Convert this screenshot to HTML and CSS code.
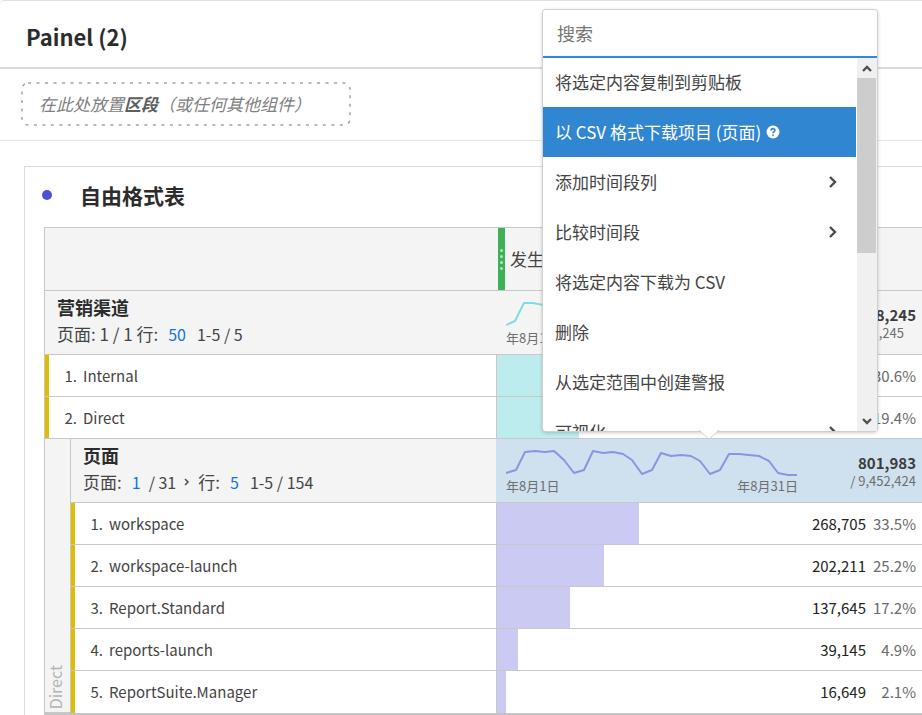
FILE: index.html
```html
<!DOCTYPE html>
<html lang="zh-CN">
<head>
<meta charset="utf-8">
<title>Painel (2)</title>
<link rel="stylesheet" href="styles.css">
</head>
<body>
<main class="panel">
  <header class="panel-header"><h1>Painel (2)</h1></header>
  <section class="segments">
    <div class="dropzone">
      <svg class="dropzone-outline" aria-hidden="true"><rect x="1" y="1" width="328" height="42" rx="6"/></svg>
      <em>在此处放置<b>区段</b>（或任何其他组件）</em>
    </div>
  </section>
  <section class="card">
    <div class="card-title"><span class="dot"></span><h2>自由格式表</h2></div>
    <table class="freeform">
      <colgroup><col class="col-rail"><col class="col-name"><col></colgroup>
      <thead>
        <tr class="tall">
          <th colspan="2"></th>
          <th class="metric" scope="col"><div class="metric-head"><span class="handle"><i></i><i></i><i></i><i></i></span>发生</div></th>
        </tr>
      </thead>
      <tbody>
        <tr class="tall group">
          <th colspan="2" scope="rowgroup">
            <div class="group-name">营销渠道</div>
            <div class="pager"><span>页面: 1 / 1 行:</span><button type="button">50</button><span class="range">1-5 / 5</span></div>
          </th>
          <td class="summary">
            <div class="summary-row">
              <div class="trend teal">
                <svg viewBox="0 0 292 28" aria-hidden="true"><polyline points="0,24 9,20 18,2 27,2 37,4"/></svg>
                <div class="dates"><span>年8月1日</span></div>
              </div>
              <div class="total"><strong>8,245</strong><span class="inset">,245</span></div>
            </div>
          </td>
        </tr>
        <tr>
          <td class="item" colspan="2"><span class="index">1.</span>Internal</td>
          <td class="value"><span class="bar teal" style="width:30.6%"></span><span class="pct">30.6%</span></td>
        </tr>
        <tr>
          <td class="item" colspan="2"><span class="index">2.</span>Direct</td>
          <td class="value"><span class="bar teal" style="width:19.4%"></span><span class="pct">19.4%</span></td>
        </tr>
        <tr class="tall group">
          <th class="rail" rowspan="6" scope="rowgroup"><span>Direct</span></th>
          <th scope="rowgroup">
            <div class="group-name">页面</div>
            <div class="pager"><span>页面:</span><button type="button">1</button><span class="range-total">/ 31</span>
              <button type="button" class="next" aria-label="下一页"><svg viewBox="0 0 6 10"><path d="M1 2l3 3-3 3"/></svg></button>
              <span>行:</span><button type="button">5</button><span class="range">1-5 / 154</span></div>
          </th>
          <td class="summary selected">
            <div class="summary-row">
              <div class="trend violet">
                <svg viewBox="0 0 292 28" aria-hidden="true"><polyline points="0,24 10,21 19,3 29,2 39,3 48,2 58,11 68,24 78,21 87,2 97,4 107,3 117,5 126,11 136,25 146,21 155,4 165,7 175,6 185,7 194,12 204,25 214,21 223,5 233,5 243,6 253,7 263,12 272,24 282,26 291,26"/></svg>
                <div class="dates"><span>年8月1日</span><span>年8月31日</span></div>
              </div>
              <div class="total"><strong>801,983</strong><span>/ 9,452,424</span></div>
            </div>
          </td>
        </tr>
        <tr>
          <td class="item"><span class="index">1.</span>workspace</td>
          <td class="value"><span class="bar violet" style="width:33.5%"></span><span class="num">268,705</span><span class="pct">33.5%</span></td>
        </tr>
        <tr>
          <td class="item"><span class="index">2.</span>workspace-launch</td>
          <td class="value"><span class="bar violet" style="width:25.2%"></span><span class="num">202,211</span><span class="pct">25.2%</span></td>
        </tr>
        <tr>
          <td class="item"><span class="index">3.</span>Report.Standard</td>
          <td class="value"><span class="bar violet" style="width:17.2%"></span><span class="num">137,645</span><span class="pct">17.2%</span></td>
        </tr>
        <tr>
          <td class="item"><span class="index">4.</span>reports-launch</td>
          <td class="value"><span class="bar violet" style="width:4.9%"></span><span class="num">39,145</span><span class="pct">4.9%</span></td>
        </tr>
        <tr>
          <td class="item"><span class="index">5.</span>ReportSuite.Manager</td>
          <td class="value"><span class="bar violet" style="width:2.1%"></span><span class="num">16,649</span><span class="pct">2.1%</span></td>
        </tr>
      </tbody>
    </table>
  </section>
</main>

<div class="menu">
  <input class="menu-search" type="text" placeholder="搜索" aria-label="搜索">
  <div class="menu-body">
    <div class="menu-list" role="menu">
      <button type="button" role="menuitem">将选定内容复制到剪贴板</button>
      <button type="button" role="menuitem" class="active">以 CSV 格式下载项目 (页面)
        <svg class="help" viewBox="0 0 14 14" aria-hidden="true"><circle cx="7" cy="7" r="6.5"/><path d="M5 5.4C5 3.1 9 3.1 9 5.3 9 6.7 7 6.700 7 8.300M7 9.600v1.500"/></svg></button>
      <button type="button" role="menuitem">添加时间段列<svg class="chevron" viewBox="0 0 10 14" aria-hidden="true"><path d="M2 2l5 5-5 5"/></svg></button>
      <button type="button" role="menuitem">比较时间段<svg class="chevron" viewBox="0 0 10 14" aria-hidden="true"><path d="M2 2l5 5-5 5"/></svg></button>
      <button type="button" role="menuitem">将选定内容下载为 CSV</button>
      <button type="button" role="menuitem">删除</button>
      <button type="button" role="menuitem">从选定范围中创建警报</button>
      <button type="button" role="menuitem">可视化<svg class="chevron" viewBox="0 0 10 14" aria-hidden="true"><path d="M2 2l5 5-5 5"/></svg></button>
    </div>
    <div class="scrollbar" aria-hidden="true">
      <svg viewBox="0 0 20 20"><path d="M6 13l4-4 4 4"/></svg>
      <span class="thumb"></span>
      <svg viewBox="0 0 20 20"><path d="M6 8l4 4 4-4"/></svg>
    </div>
  </div>
  <svg class="menu-tail" viewBox="0 0 20 11" aria-hidden="true"><path d="M0 0L10 9 20 0"/></svg>
</div>
</body>
</html>
```

FILE: styles.css
```css
* { box-sizing: border-box; }

body {
  margin: 0;
  overflow: hidden;
  background: #fff;
  color: #444;
  font: 15px/20px "Noto Sans CJK SC", "Noto Sans", sans-serif;
}

h1, h2 { margin: 0; color: #2c2c2c; font-weight: 700; }
button { margin: 0; padding: 0; border: 0; background: none; color: inherit; font: inherit; cursor: pointer; }

.panel { border-top: 1px solid #e1e1e1; border-radius: 4px 0 0 0; }
.panel-header { padding: 23px 26px 19px; border-bottom: 2px solid #dadada; }
.panel-header h1 { font-size: 22px; line-height: 24px; }

.segments { padding: 13px 21px 14px; border-bottom: 1px solid #e6e6e6; }
.dropzone {
  position: relative;
  display: flex;
  align-items: center;
  width: 330px;
  height: 44px;
  padding-left: 18px;
  color: #808080;
  font-size: 17px;
}
.dropzone b { color: #5e5e5e; }
.dropzone-outline { position: absolute; inset: 0; width: 100%; height: 100%; fill: none; stroke: #a4a4a4; stroke-width: 1.5; stroke-dasharray: 3 5.500; }

.card { margin: 25px 0 0 24px; border: 1px solid #dcdcdc; border-width: 1px 0 0 1px; }
.card-title { display: flex; align-items: center; gap: 28px; height: 60px; padding: 0 17px 5px; }
.card-title h2 { font-size: 21px; line-height: 30px; }
.dot { width: 10px; height: 10px; border-radius: 50%; background: #4f4fd6; }

.freeform {
  width: calc(100% - 19px);
  margin-left: 19px;
  table-layout: fixed;
  border-collapse: separate;
  border-spacing: 0;
  border-top: 1px solid #c8c8c8;
  border-bottom: 2px solid #c4c4c4;
}
.col-rail { width: 27px; }
.col-name { width: 425px; }
.freeform th, .freeform td { height: 42px; padding: 0; border-bottom: 1px solid #c8c8c8; text-align: left; font-weight: 400; }
.freeform th { background: #f4f4f4; }
.freeform .tall > * { height: 64px; }
.freeform thead .tall > * { height: 63px; }
.freeform tr > :first-child { border-left: 1px solid #c8c8c8; }
.freeform tbody tr:last-child > * { border-bottom: 0; }

.metric-head { display: flex; align-items: center; height: 62px; gap: 5px; margin-left: 2px; font-size: 17px; }
.handle { display: flex; flex-direction: column; align-items: center; justify-content: center; gap: 3px; width: 7px; height: 62px; background: #3db155; }
.handle i { width: 3px; height: 3px; border-radius: 50%; background: #b5e3be; }

.freeform .group th { padding: 0 0 4px 12px; }
.group-name { color: #2c2c2c; font-size: 18px; line-height: 26px; font-weight: 700; }
.pager { display: flex; align-items: baseline; gap: 8px; font-size: 17px; line-height: 27px; }
.pager button { margin-left: 2px; color: #1473e6; font-size: 16px; }
.pager .range { margin-left: 3px; }
.range, .range-total { font-size: 16px; }
.pager .next { align-self: center; margin-left: 0; }
.next svg { display: block; width: 6px; height: 10px; fill: none; stroke: #4b4b4b; stroke-width: 1.5; }

.freeform .group .rail { padding: 0 0 3px; border-right: 1px solid #c8c8c8; vertical-align: bottom; color: #b3b3b3; font-size: 16px; line-height: 20px; }
.rail span { display: block; writing-mode: vertical-rl; transform: rotate(180deg); }

.freeform .item { position: relative; padding-left: 10px; }
.freeform tr > .item:first-child { border-left: 0; }
.freeform tr > .item[colspan] { border-left: 1px solid #c8c8c8; }
.item::before { content: ""; position: absolute; left: 0; top: 0; bottom: 0; width: 4px; background: #e0bd00; }
.index { display: inline-block; width: 22px; margin-right: 6px; text-align: right; }

.freeform td.value { position: relative; padding-right: 6px; border-left: 1px solid #c8c8c8; text-align: right; }
.bar { position: absolute; left: 0; top: 0; bottom: 0; }
.bar.teal { background: #bcecee; }
.bar.violet { background: #cbcaf2; }
.num { color: #222; }
.pct { display: inline-block; width: 50px; color: #6a6a6a; }

.summary { background: #f4f4f4; }
.freeform .summary.selected { background: #cfe0ef; }
.summary-row { display: flex; justify-content: space-between; padding: 2px 6px 0 10px; }
.trend { width: 292px; }
.trend svg { display: block; width: 292px; height: 28px; fill: none; stroke-width: 2; stroke-linejoin: round; }
.trend.teal svg { stroke: #7fdde0; }
.trend.violet svg { stroke: #8f92e3; }
.dates { display: flex; justify-content: space-between; color: #6e6e6e; font-size: 13px; line-height: 18px; }
.total { display: flex; flex-direction: column; align-items: flex-end; justify-content: center; line-height: 18px; }
.total strong { color: #3c3c3c; }
.total span { color: #6e6e6e; font-size: 13px; }
.total .inset { margin-right: 12px; }

.menu {
  position: absolute;
  left: 543px;
  top: 10px;
  width: 334px;
  border-radius: 3px;
  background: #fff;
  box-shadow: 0 0 0 1px #d0d0d0, 0 1px 4px rgba(0, 0, 0, .3);
}
.menu-search {
  display: block;
  width: 100%;
  height: 48px;
  padding: 0 14px;
  border: 0;
  border-bottom: 2px solid #2f86e4;
  border-radius: 3px 3px 0 0;
  outline: 0;
  background: #fff;
  font: 18px/24px "Noto Sans CJK SC", sans-serif;
}
.menu-search::placeholder { color: #757575; opacity: 1; }
.menu-body { display: flex; height: 373px; }
.menu-list { flex: 1; overflow: hidden; }
.menu-list button { display: flex; align-items: center; width: 100%; height: 50px; padding: 0 18px 1px 12px; font-size: 17px; text-align: left; }
.menu-list button:first-child { height: 49px; }
.menu-list .active { background: #3186d1; color: #fff; }
.help { width: 14px; height: 14px; margin-left: 5px; }
.help circle { fill: #fff; }
.help path { fill: none; stroke: #3186d1; stroke-width: 1.6; }
.chevron { width: 10px; height: 14px; margin-left: auto; fill: none; stroke: #4b4b4b; stroke-width: 2.4; }
.scrollbar { display: flex; flex-direction: column; width: 20px; margin-left: 1px; background: #f0f0f0; }
.scrollbar svg { width: 20px; height: 20px; fill: none; stroke: #505050; stroke-width: 2.4; }
.thumb { width: 19px; height: 175px; margin-bottom: auto; background: #cdcdcd; }
.menu-tail { position: absolute; left: 156px; top: 420px; width: 20px; height: 11px; fill: #fff; stroke: #d0d0d0; }
```
